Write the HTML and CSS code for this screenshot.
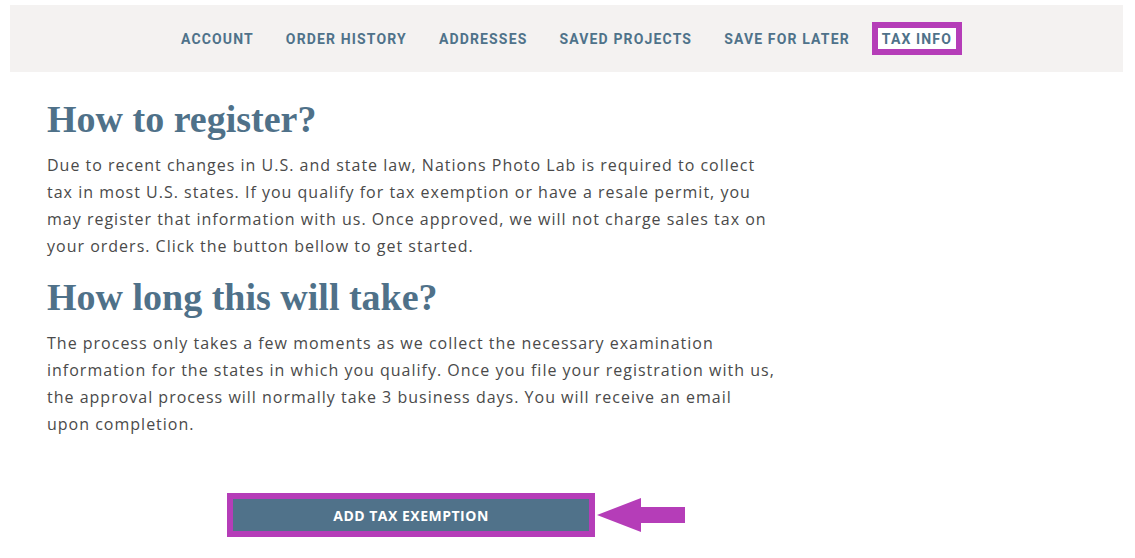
FILE: index.html
```html
<!DOCTYPE html>
<html lang="en">
<head>
  <meta charset="UTF-8">
  <meta name="viewport" content="width=device-width, initial-scale=1.0">
  <title>Tax Info</title>
  <link rel="stylesheet" href="styles.css">
</head>
<body>
  <nav class="account-nav">
    <a href="#">Account</a>
    <a href="#">Order History</a>
    <a href="#">Addresses</a>
    <a href="#">Saved Projects</a>
    <a href="#">Save for Later</a>
    <a href="#" class="active">Tax Info</a>
  </nav>

  <div class="content">
    <h2>How to register?</h2>
    <p>Due to recent changes in U.S. and state law, Nations Photo Lab is required to collect tax in most U.S. states. If you qualify for tax exemption or have a resale permit, you may register that information with us. Once approved, we will not charge sales tax on your orders. Click the button bellow to get started.</p>

    <h2>How long this will take?</h2>
    <p>The process only takes a few moments as we collect the necessary examination information for the states in which you qualify. Once you file your registration with us, the approval process will normally take 3 business days. You will receive an email upon completion.</p>

    <div class="action-row">
      <div class="highlight">
        <button class="btn">ADD TAX EXEMPTION</button>
      </div>
      <svg class="arrow" width="90" height="36" viewBox="0 0 90 36">
        <polygon points="0,18 44,1 44,10 88,10 88,26 44,26 44,35" fill="#b53db8"/>
      </svg>
    </div>
  </div>
</body>
</html>
```

FILE: styles.css
```css
body {
  margin: 0;
  background: #fff;
  font-family: "Open Sans", sans-serif;
}

.account-nav {
  margin: 5px 12px 0 10px;
  height: 67px;
  background-color: #f4f2f1;
  display: flex;
  justify-content: center;
  align-items: center;
  gap: 32px;
}

.account-nav a {
  font-family: Roboto, sans-serif;
  font-weight: 700;
  font-size: 14px;
  letter-spacing: 1.15px;
  text-transform: uppercase;
  color: #4f728a;
  text-decoration: none;
  line-height: 20px;
}

.account-nav a.active {
  border: 6px solid #b53db8;
  padding: 1px 4px 0;
  margin: -7px -10px -6px;
  background: #fff;
}

.content {
  padding: 0 0 0 47px;
  width: 730px;
}

h2 {
  font-family: "Liberation Serif", serif;
  font-weight: 700;
  font-size: 38px;
  color: #4f7189;
  margin: 0;
  line-height: 44px;
}

.content h2:first-child {
  margin-top: 25px;
}

p {
  font-size: 16px;
  line-height: 27px;
  color: #4a4a4a;
  margin: 11px 0 15px;
  letter-spacing: 1px;
}

.action-row {
  display: flex;
  align-items: center;
  margin-top: 55px;
  margin-left: 180px;
}

.highlight {
  border: 6px solid #b53db8;
  display: flex;
}

.btn {
  width: 356px;
  height: 32px;
  border: 0;
  background-color: #50728a;
  color: #fff;
  font-family: "Open Sans", sans-serif;
  font-weight: 700;
  font-size: 14px;
  letter-spacing: 0.5px;
}

.arrow {
  margin-left: 2px;
}
```
